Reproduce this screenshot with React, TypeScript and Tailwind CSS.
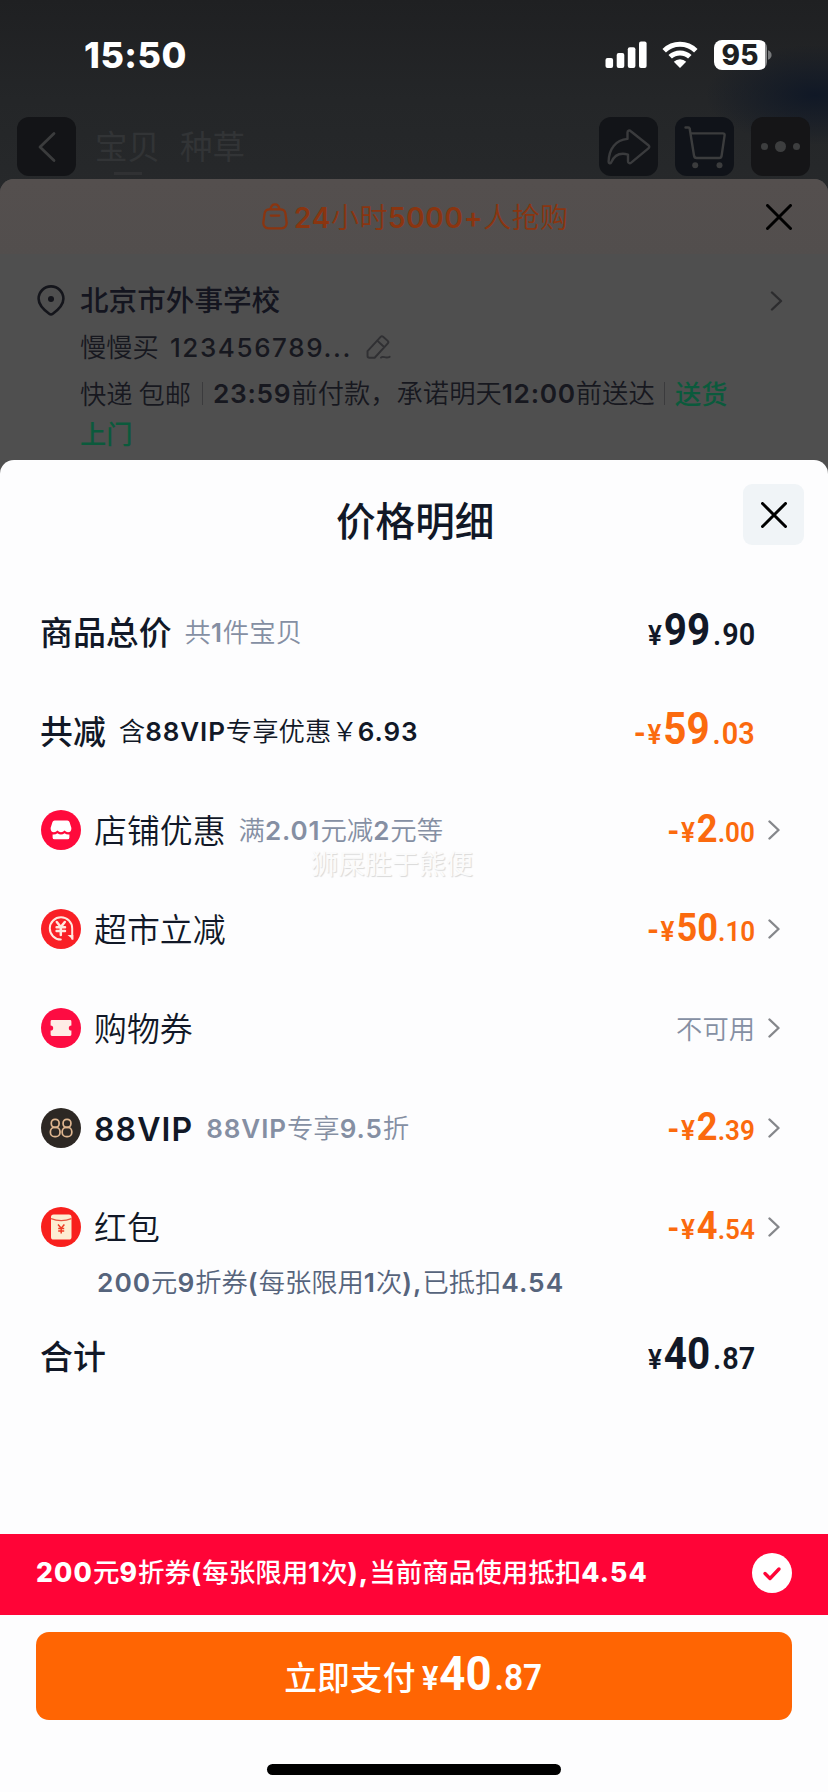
import React from "react";

const SANS = "font-['Inter','Noto_Sans_CJK_SC',sans-serif]";
const CJK = "font-['Noto_Sans_CJK_SC',sans-serif]";

/* Chinese runs keep the parent's weight, Latin runs and digits take `latin`. */
function Mixed({ text, latin }: { text: string; latin: string }) {
  const parts = text.split(/([0-9A-Za-z.,:+()]+)/).filter(Boolean);
  return (
    <>
      {parts.map((p, i) =>
        /^[0-9A-Za-z.,:+()]/.test(p) ? (
          <span key={i} className={`font-['Inter',sans-serif] ${latin}`}>
            {p}
          </span>
        ) : (
          <React.Fragment key={i}>{p}</React.Fragment>
        )
      )}
    </>
  );
}

function Chevron({ className }: { className: string }) {
  return (
    <svg viewBox="0 0 12 20" fill="none" stroke="currentColor" strokeWidth="2.4" strokeLinecap="round" strokeLinejoin="round" className={className}>
      <path d="M1.5 1.5 10.5 10 1.5 18.5" />
    </svg>
  );
}

function Cross({ className }: { className: string }) {
  return (
    <svg viewBox="0 0 26 26" fill="none" stroke="#000" strokeWidth="3" strokeLinecap="round" className={className}>
      <path d="M1.5 1.5 24.5 24.5M24.5 1.5 1.5 24.5" />
    </svg>
  );
}

function StatusBar() {
  return (
    <div className="flex h-[117px] items-start pt-[35px]">
      <div className="ml-[84px] w-[110px] font-['Inter',sans-serif] text-[36px] leading-[41px] font-extrabold tracking-[0.5px] text-white">15:50</div>
      <svg viewBox="0 0 42 27" className="mt-[6px] ml-[411px] h-[27px] w-[42px]" fill="#fff">
        <rect x="0.5" y="17" width="7.6" height="10" rx="2" />
        <rect x="11.7" y="12" width="7.6" height="15" rx="2" />
        <rect x="22.8" y="6.2" width="7.6" height="20.8" rx="2" />
        <rect x="34" y="0.5" width="7.6" height="26.5" rx="2" />
      </svg>
      <svg viewBox="0 0 36 27" className="mt-[6px] ml-[15px] h-[27px] w-[36px]">
        <g fill="none" stroke="#fff" strokeWidth="5">
          <path d="M2.2 9.8 A22.6 22.6 0 0 1 33.8 9.8" />
          <path d="M8.2 15.8 A14.2 14.2 0 0 1 27.8 15.8" />
        </g>
        <path d="M18 27 11.8 20.7 A8.8 8.8 0 0 1 24.2 20.7Z" fill="#fff" />
      </svg>
      <div className="mt-[5px] ml-[16px] flex h-[30px] w-[53px] items-center justify-center rounded-[8px] bg-[linear-gradient(to_right,#fff_96%,#8b8c8e_96%)] pr-px font-['Inter',sans-serif] text-[28px] leading-[30px] font-extrabold text-[#1d1f22]">95</div>
      <svg viewBox="0 0 5 12" className="mt-[14px] ml-px h-[12px] w-[4px]" fill="#77797b">
        <path d="M0 0C6 2 6 10 0 12Z" />
      </svg>
    </div>
  );
}

function NavBar() {
  const tile = "flex size-[59px] items-center justify-center rounded-[12px]";
  return (
    <div className="flex h-[62px] items-start">
      <div className={`${tile} ml-[17px] bg-[#131417]`}>
        <svg viewBox="0 0 18 32" fill="none" stroke="#3b3c3d" strokeWidth="2.8" strokeLinecap="round" strokeLinejoin="round" className="mt-px h-[32px] w-[18px]">
          <path d="M16 2.5 2 16 16 29.5" />
        </svg>
      </div>
      <div className={`${CJK} ml-[19px] flex w-[504px] gap-[20px] text-[32.5px] leading-[56px] font-normal text-[#323436]`}>
        <div className="flex flex-col items-center">
          <span className="h-[55px]">宝贝</span>
          <span className="h-[3px] w-[28px] bg-[#303133]" />
        </div>
        <span>种草</span>
      </div>
      <div className={`${tile} bg-[#121418]`}>
        <svg viewBox="0 0 44 36" fill="none" stroke="#3a3b3d" strokeWidth="2.4" strokeLinejoin="round" strokeLinecap="round" className="h-[36px] w-[44px]">
          <path d="M20.5 3.4C20.5 1.7 22.4 1 23.8 2.2L41.4 16.2C42.6 17.2 42.6 18.4 41.4 19.4L24.2 33.6C22.6 34.8 21 34 21 32.2V25.6C12.4 23.2 7.2 26.4 4.2 33.4C3.4 35 1.6 34.6 1.6 32.8C1.8 20 8.6 10.8 20.5 9.9Z" />
        </svg>
      </div>
      <div className={`${tile} ml-[17px] bg-[#101319]`}>
        <svg viewBox="0 0 44 44" fill="none" stroke="#3b3c3d" strokeWidth="2.4" strokeLinejoin="round" strokeLinecap="round" className="h-[44px] w-[44px]">
          <path d="M2.5 2.5H5.2C6 2.5 6.6 3 6.7 3.8L11 30.5C11.2 32 12.2 33 13.6 33H36.2C37.6 33 38.4 32 38.6 30.8L41.6 10.4C41.8 9 41 8.4 39.8 8.4H8" />
          <circle cx="12.2" cy="40.2" r="3" fill="#3b3c3d" stroke="none" />
          <circle cx="36.5" cy="40.2" r="3" fill="#3b3c3d" stroke="none" />
        </svg>
      </div>
      <div className={`${tile} ml-[17px] gap-[7px] bg-[#151517]`}>
        <span className="size-[7px] rounded-full bg-[#3d3e3f]" />
        <span className="size-[11px] rounded-full bg-[#3d3e3f]" />
        <span className="size-[7px] rounded-full bg-[#3d3e3f]" />
      </div>
    </div>
  );
}

function Backdrop() {
  return (
    <div className="flex h-[281px] flex-col">
      <div className="flex h-[75px] items-center rounded-t-[14px] bg-linear-to-b from-[#544f4e] to-[#524e4d]">
        <svg viewBox="0 0 26 27" fill="none" stroke="#8a3510" strokeWidth="2.3" strokeLinecap="round" className="ml-[262px] h-[27px] w-[26px]">
          <path d="M7.5 6.4C5 6.4 3 8 2.6 10.4L1.4 19C1 22.6 3 25.4 6.6 25.4H19.4C23 25.4 25 22.6 24.6 19L23.4 10.4C23 8 21 6.4 18.5 6.4ZM8.5 6.2C9 3.2 10.6 1.4 13 1.4S17 3.2 17.5 6.2M8.8 12.6H17.2" />
        </svg>
        <div className={`${CJK} ml-[6px] w-[472px] text-[28px] leading-[40px] tracking-[0.4px] font-[350] whitespace-nowrap text-[#8a3510]`}>
          <Mixed text="24小时5000+人抢购" latin="font-semibold tracking-[0.7px]" />
        </div>
        <Cross className="size-[26px]" />
      </div>
      <div className="flex h-[52px] items-end">
        <svg viewBox="0 0 28 31" fill="none" stroke="#14151b" strokeWidth="2.6" strokeLinejoin="round" className="mb-[-10px] ml-[37px] h-[31px] w-[28px]">
          <path d="M12.2 28.8C6.4 24.6 1.6 20 1.6 13.8A12.4 12.4 0 0 1 26.4 13.8C26.4 20 21.6 24.6 15.8 28.8C14.6 29.7 13.4 29.7 12.2 28.8Z" />
          <circle cx="14" cy="14" r="3" fill="#14151b" stroke="none" />
        </svg>
        <div className={`${CJK} mb-[-13px] ml-[15px] w-[690px] text-[28.6px] leading-[40px] font-medium text-[#14151f]`}>北京市外事学校</div>
        <Chevron className="mb-[-5px] h-[20px] w-[13px] text-[#2c2c2e]" />
      </div>
      <div className="mt-[21px] ml-[80px] flex h-[40px] items-center">
        <div className={`${CJK} text-[26.3px] leading-[40px] font-[350] whitespace-nowrap text-[#17181f]`}>
          慢慢买<span className="ml-[11px] font-['Inter',sans-serif] text-[26px] font-medium tracking-[1.6px]">123456789...</span>
        </div>
        <svg viewBox="0 0 26 26" fill="none" stroke="#303033" strokeWidth="2" strokeLinejoin="round" strokeLinecap="round" className="ml-[14px] h-[26px] w-[25px]">
          <path d="M1.6 17.2 15.2 2.4C16 1.6 17 1.6 17.8 2.3L22.6 6.6C23.4 7.3 23.4 8.4 22.7 9.2L9 24.2H3.6C2.4 24.2 1.6 23.6 1.6 22.4ZM11.8 6.4 18.8 13M15.6 24C18 21.6 20 25.6 24.6 23.2" />
        </svg>
      </div>
      <div className={`${CJK} mt-[6px] ml-[80px] flex h-[40px] items-center text-[26.3px] leading-[40px] font-[350] whitespace-nowrap text-[#17181f]`}>
        <span className="w-[122px]">快递 包邮</span>
        <span className="h-[23px] w-px bg-[#3b3b3d]" />
        <span className="ml-[10px] w-[451px]">
          <Mixed text="23:59前付款，承诺明天12:00前送达" latin="font-semibold tracking-[0.7px]" />
        </span>
        <span className="h-[23px] w-px bg-[#3b3b3d]" />
        <span className="ml-[10px] font-medium text-[#0b5a3c]">送货</span>
      </div>
      <div className={`${CJK} ml-[80px] text-[26.3px] leading-[40px] font-medium text-[#0b5a3c]`}>上门</div>
    </div>
  );
}

type PriceSize = "total" | "item";

function Price({ value, minus, size, color }: { value: string; minus?: boolean; size: PriceSize; color: string }) {
  const [whole, cents] = value.split(".");
  const total = size === "total";
  return (
    <div className={`flex origin-right scale-x-[0.93] items-baseline font-['Roboto',sans-serif] leading-[44px] font-semibold ${total ? "mt-[4px]" : "mt-[2px]"} ${color}`}>
      {minus && <span className="mr-[2px] text-[34px] leading-[44px]">-</span>}
      <span className="w-[17px] text-[28px] font-semibold">¥</span>
      <span className={total ? "text-[43.5px] leading-[44px] font-bold" : "text-[39px] leading-[44px] font-bold"}>{whole}</span>
      <span className={total ? "ml-[3px] text-[31px]" : "text-[28px]"}>.</span>
      <span className={total ? "ml-px text-[31px]" : "text-[28px]"}>{cents}</span>
    </div>
  );
}

function StoreIcon() {
  return (
    <svg viewBox="0 0 40 40" className="size-[40px]">
      <circle cx="20" cy="20" r="20" fill="#ff0a3c" />
      <path d="M13.6 10.5H26.4Q28 10.5 28.5 12L30.4 18Q30.5 22.2 27 22.2 25 22.2 23.6 20.6 22 22.2 20 22.2T16.4 20.6Q15 22.2 13 22.2 9.5 22.2 9.6 18L11.5 12Q12 10.5 13.6 10.5Z" fill="#fff" />
      <path d="M11.6 24.4Q14.4 24.8 16.4 23.2 20 25.8 23.6 23.2 25.6 24.8 28.4 24.4V27.4Q28.4 29.3 26.5 29.3H13.5Q11.6 29.3 11.6 27.4Z" fill="#fff" />
    </svg>
  );
}

function MarketIcon() {
  return (
    <svg viewBox="0 0 40 40" className="size-[40px]">
      <circle cx="20" cy="20" r="20" fill="#f92026" />
      <g fill="none" stroke="#ffe9df" strokeLinecap="round" strokeLinejoin="round">
        <path d="M19.8 30.6A11.2 11.2 0 1 1 31.2 19.4V29.8" strokeWidth="2" />
        <path d="M15.8 13 19.8 18 23.8 13M15.6 18.2H24M15.6 22H24M19.8 18V26" strokeWidth="2.5" />
      </g>
      <path d="M26.5 26 32.3 31V26Z" fill="#ffe9df" />
    </svg>
  );
}

function CouponIcon() {
  return (
    <svg viewBox="0 0 40 40" className="size-[40px]">
      <circle cx="20" cy="20" r="20" fill="#fd0c42" />
      <path d="M11 12H29Q30.4 12 30.4 13.4V17.4A2.6 2.6 0 0 0 30.4 22.6V26.6Q30.4 28 29 28H11Q9.6 28 9.6 26.6V22.6A2.6 2.6 0 0 0 9.6 17.4V13.4Q9.6 12 11 12Z" fill="#ffece6" />
    </svg>
  );
}

function VipIcon() {
  return (
    <svg viewBox="0 0 40 40" className="size-[40px]">
      <circle cx="20" cy="20" r="20" fill="#2d2824" />
      <g fill="none" stroke="#dfb690" strokeWidth="1.7">
        <rect x="10.3" y="11.4" width="7.8" height="8" rx="3.6" />
        <rect x="9.4" y="19.4" width="9.6" height="9.2" rx="4.2" />
        <rect x="22.1" y="11.4" width="7.8" height="8" rx="3.6" />
        <rect x="21.2" y="19.4" width="9.6" height="9.2" rx="4.2" />
      </g>
    </svg>
  );
}

function RedPacketIcon() {
  return (
    <svg viewBox="0 0 40 40" className="size-[40px]">
      <circle cx="20" cy="20" r="20" fill="#f8201d" />
      <rect x="10" y="7.6" width="20.5" height="25" rx="2.6" fill="#fdeed2" />
      <path d="M10 11.6Q20.2 15.6 30.5 11.6" fill="none" stroke="#e5533f" strokeWidth="1.2" />
      <path d="M17 17.6 20.2 21.2 23.4 17.6M17.2 21.4H23.2M17.2 24H23.2M20.2 21.2V26.6" fill="none" stroke="#ef3b24" strokeWidth="1.5" />
    </svg>
  );
}

const INK = "text-[#111827]";
const ORANGE = "text-[#fb6a0e]";

type RowProps = {
  icon?: React.ReactNode;
  title: string;
  strong?: boolean;
  note?: string;
  noteClass?: string;
  children: React.ReactNode;
  arrow?: boolean;
};

function Row({ icon, title, strong, note, noteClass = "", children, arrow }: RowProps) {
  return (
    <div className={`flex h-[99.2px] items-center pr-[48px] ${icon ? "pl-[41px]" : "pl-[40px]"}`}>
      {icon && <div className="mr-[13px]">{icon}</div>}
      <div className={`${CJK} mt-[-2px] text-[32.9px] leading-[48px] whitespace-nowrap ${INK} ${strong ? "font-medium" : "font-[350]"}`}>
        <Mixed text={title} latin="relative top-[2px] font-semibold text-[32px] tracking-[1.1px]" />
      </div>
      {note && (
        <div className={`${CJK} ml-[13px] text-[26.4px] leading-[40px] font-[350] whitespace-nowrap ${noteClass || "text-[#858fa3]"}`}>
          <Mixed text={note} latin="font-semibold tracking-[0.9px] text-[26px]" />
        </div>
      )}
      <div className="ml-auto">{children}</div>
      <div className="ml-[13px] w-[12px]">{arrow && <Chevron className="h-[20px] w-[12px] text-[#85878b]" />}</div>
    </div>
  );
}

function PriceSheet() {
  return (
    <div className="relative flex h-[1332px] flex-col rounded-t-[14px] bg-[#fdfdfe]">
      <div className="flex h-[122px] items-start">
        <div className={`${CJK} ml-[336px] w-[407px] pt-[29px] text-[39.6px] leading-[60px] font-medium ${INK}`}>价格明细</div>
        <div className="mt-[24px] flex size-[61px] items-center justify-center rounded-[9px] bg-[#f0f4f7]">
          <Cross className="size-[26px]" />
        </div>
      </div>
      <div className="flex flex-col">
        <Row title="商品总价" strong note="共1件宝贝">
          <Price value="99.90" size="total" color={INK} />
        </Row>
        <Row title="共减" strong note="含88VIP专享优惠￥6.93" noteClass={INK}>
          <Price value="59.03" minus size="total" color={ORANGE} />
        </Row>
        <Row icon={<StoreIcon />} title="店铺优惠" note="满2.01元减2元等" arrow>
          <Price value="2.00" minus size="item" color={ORANGE} />
        </Row>
        <Row icon={<MarketIcon />} title="超市立减" arrow>
          <Price value="50.10" minus size="item" color={ORANGE} />
        </Row>
        <Row icon={<CouponIcon />} title="购物券" arrow>
          <span className={`${CJK} text-[26.3px] leading-[40px] font-[350] text-[#858fa3]`}>不可用</span>
        </Row>
        <Row icon={<VipIcon />} title="88VIP" note="88VIP专享9.5折" arrow>
          <Price value="2.39" minus size="item" color={ORANGE} />
        </Row>
        <Row icon={<RedPacketIcon />} title="红包" arrow>
          <Price value="4.54" minus size="item" color={ORANGE} />
        </Row>
      </div>
      <div className={`${CJK} mt-[-15px] ml-[97px] h-[41px] text-[26.3px] leading-[40px] font-[350] whitespace-nowrap text-[#56647c]`}>
        <Mixed text="200元9折券(每张限用1次),已抵扣4.54" latin="font-semibold tracking-[1px]" />
      </div>
      <div className="mt-[4px]">
        <Row title="合计" strong>
          <Price value="40.87" size="total" color={INK} />
        </Row>
      </div>
      <div className="mt-auto flex h-[81px] items-center justify-between bg-[#ff0437] px-[36px]">
        <div className={`${CJK} mt-[-7px] text-[26.5px] leading-[40px] font-medium whitespace-nowrap text-white`}>
          <Mixed text="200元9折券(每张限用1次),当前商品使用抵扣4.54" latin="font-extrabold tracking-[1.1px]" />
        </div>
        <svg viewBox="0 0 40 40" className="mt-[-3px] size-[40px]">
          <circle cx="20" cy="20" r="20" fill="#fff" />
          <path d="M13 20.5 18 25.5 27 16" fill="none" stroke="#ff0437" strokeWidth="3.4" strokeLinecap="round" strokeLinejoin="round" />
        </svg>
      </div>
      <div className="mx-[36px] mt-[17px] flex h-[88px] items-center justify-center rounded-[13px] bg-[#ff6503] pl-[8px] text-white">
        <div className="flex items-baseline">
          <span className={`${CJK} text-[32.8px] leading-[48px] font-medium`}>立即支付</span>
          <span className="ml-[7px] flex origin-left scale-x-[0.93] items-baseline font-['Roboto',sans-serif] leading-[50px]">
            <span className="text-[33px] font-semibold">¥</span>
            <span className="ml-px text-[49px] font-bold">40</span>
            <span className="ml-[3px] text-[36px] font-semibold">.87</span>
          </span>
        </div>
      </div>
      <div className="mt-[44px] mb-[17px] flex h-[11px] justify-center">
        <div className="h-[11px] w-[294px] rounded-full bg-black" />
      </div>
      <div className={`${CJK} pointer-events-none absolute top-[383px] left-[311px] text-[27px] leading-[40px] whitespace-nowrap text-[#fbfbfb] [text-shadow:1px_1px_1px_#d9d9d9]`}>狮屎胜于熊便</div>
    </div>
  );
}

export default function App() {
  return (
    <div className={`${SANS} h-[1792px] w-[828px] overflow-hidden bg-[#252628]`}>
      <div className="h-[1792px] bg-[radial-gradient(ellipse_110px_50px_at_815px_95px,#101826_0%,transparent_100%),linear-gradient(to_bottom,#1f2022_0px,#242628_100px,#27292b_200px)]">
        <StatusBar />
        <NavBar />
        <div className="rounded-t-[14px] bg-[#4f4f4f]">
          <Backdrop />
          <PriceSheet />
        </div>
      </div>
    </div>
  );
}
